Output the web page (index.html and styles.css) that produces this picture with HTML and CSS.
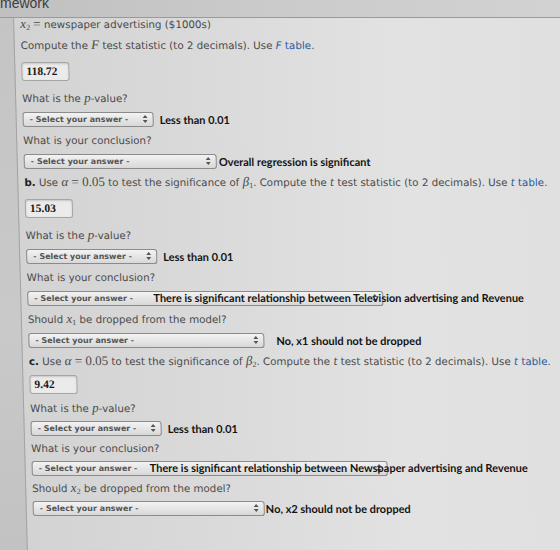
FILE: index.html
```html
<!DOCTYPE html>
<html>
<head>
<meta charset="utf-8">
<title>Homework</title>
<link rel="stylesheet" href="styles.css">
</head>
<body>
<header class="topbar"><span class="title">mework</span></header>
<main class="panel">
  <section class="part">
    <p class="line"><span class="mi">x</span><sub class="sub">2</sub> <span class="mn">=</span> newspaper advertising ($1000s)</p>
    <p class="line">Compute the <span class="mi">F</span> test statistic (to 2 decimals). Use <span class="link"><i>F</i> table</span>.</p>
    <div class="row inp-row"><span class="input">118.72</span></div>
    <p class="line">What is the <span class="mi">p</span>-value?</p>
    <div class="row">
      <span class="select w-short"><span class="label">- Select your answer -</span><svg class="arr" width="5" height="8" viewBox="0 0 5 8"><path d="M2.5 0L5 3H0z M2.5 8L5 5H0z" fill="#555"/></svg></span>
      <span class="ans gap-s">Less than 0.01</span>
    </div>
    <p class="line">What is your conclusion?</p>
    <div class="row">
      <span class="select w-mid"><span class="label">- Select your answer -</span><svg class="arr" width="5" height="8" viewBox="0 0 5 8"><path d="M2.5 0L5 3H0z M2.5 8L5 5H0z" fill="#555"/></svg></span>
      <span class="ans gap-xs">Overall regression is significant</span>
    </div>
  </section>

  <section class="part">
    <p class="line"><b class="lead">b.</b> Use <span class="mi">α</span> <span class="mn">= 0.05</span> to test the significance of <span class="mi">β</span><sub class="sub">1</sub>. Compute the <i>t</i> test statistic (to 2 decimals). Use <span class="link"><i>t</i> table</span>.</p>
    <div class="row inp-row"><span class="input">15.03</span></div>
    <p class="line">What is the <span class="mi">p</span>-value?</p>
    <div class="row">
      <span class="select w-short"><span class="label">- Select your answer -</span><svg class="arr" width="5" height="8" viewBox="0 0 5 8"><path d="M2.5 0L5 3H0z M2.5 8L5 5H0z" fill="#555"/></svg></span>
      <span class="ans gap-s">Less than 0.01</span>
    </div>
    <p class="line">What is your conclusion?</p>
    <div class="row">
      <span class="select w-long"><span class="label">- Select your answer -</span><svg class="arr" width="5" height="8" viewBox="0 0 5 8"><path d="M2.5 0L5 3H0z M2.5 8L5 5H0z" fill="#555"/></svg></span>
      <span class="ans over over-b">There is significant relationship between Television advertising and Revenue</span>
    </div>
    <p class="line">Should <span class="mi">x</span><sub class="sub">1</sub> be dropped from the model?</p>
    <div class="row">
      <span class="select w-med"><span class="label">- Select your answer -</span><svg class="arr" width="5" height="8" viewBox="0 0 5 8"><path d="M2.5 0L5 3H0z M2.5 8L5 5H0z" fill="#555"/></svg></span>
      <span class="ans gap-l">No, x1 should not be dropped</span>
    </div>
  </section>

  <section class="part tight">
    <p class="line"><b class="lead">c.</b> Use <span class="mi">α</span> <span class="mn">= 0.05</span> to test the significance of <span class="mi">β</span><sub class="sub">2</sub>. Compute the <i>t</i> test statistic (to 2 decimals). Use <span class="link"><i>t</i> table</span>.</p>
    <div class="row inp-row"><span class="input">9.42</span></div>
    <p class="line">What is the <span class="mi">p</span>-value?</p>
    <div class="row">
      <span class="select w-short"><span class="label">- Select your answer -</span><svg class="arr" width="5" height="8" viewBox="0 0 5 8"><path d="M2.5 0L5 3H0z M2.5 8L5 5H0z" fill="#555"/></svg></span>
      <span class="ans gap-s">Less than 0.01</span>
    </div>
    <p class="line">What is your conclusion?</p>
    <div class="row">
      <span class="select w-long"><span class="label">- Select your answer -</span><svg class="arr" width="5" height="8" viewBox="0 0 5 8"><path d="M2.5 0L5 3H0z M2.5 8L5 5H0z" fill="#555"/></svg></span>
      <span class="ans over over-c">There is significant relationship between Newspaper advertising and Revenue</span>
    </div>
    <p class="line">Should <span class="mi">x</span><sub class="sub">2</sub> be dropped from the model?</p>
    <div class="row">
      <span class="select w-med2"><span class="label">- Select your answer -</span><svg class="arr" width="5" height="8" viewBox="0 0 5 8"><path d="M2.5 0L5 3H0z M2.5 8L5 5H0z" fill="#555"/></svg></span>
      <span class="ans gap-0">No, x2 should not be dropped</span>
    </div>
  </section>
</main>
</body>
</html>
```
FILE: styles.css
```css
html, body {
  margin: 0;
  padding: 0;
  overflow: hidden;
}
body {
  width: 560px;
  height: 550px;
  background: linear-gradient(180deg, #c4c4c4, #c9c9c9 60%, #c2c2c2);
  font-family: "DejaVu Sans", Verdana, sans-serif;
  color: #4a4a4a;
}
.topbar {
  height: 17px;
  border-bottom: 1px solid #9a9a9a;
  background: linear-gradient(90deg, #c0c0c0, #cbcbcb 50%, #d2d2d2);
  overflow: hidden;
  position: relative;
  z-index: 1;
}
.title {
  display: block;
  margin-top: -4px;
  font-family: "Liberation Sans", Arial, sans-serif;
  font-size: 14px;
  line-height: 14px;
  color: #3c3c3c;
}
.panel {
  margin-left: 13px;
  margin-top: -2px;
  height: 540px;
  border-left: 1px solid #a3a3a3;
  padding-left: 6px;
  transform: skewX(1.48deg);
  transform-origin: 0 0;
  background: linear-gradient(90deg, #d3d3d3, #dadada 35%, #e2e2e2 70%, #e0e0e0);
  display: flex;
  flex-direction: column;
  gap: 5px;
}
.part {
  display: flex;
  flex-direction: column;
  gap: 5px;
}
.part.tight {
  gap: 4px;
}
.line {
  margin: 0;
  height: 16px;
  line-height: 16px;
  font-size: 10.3px;
  white-space: nowrap;
}
.lead {
  color: #222;
}
.mi {
  font-family: "Liberation Serif", "DejaVu Serif", serif;
  font-style: italic;
  font-size: 13px;
}
.mn {
  font-family: "Liberation Serif", "DejaVu Serif", serif;
  font-size: 13px;
}
.sub {
  font-family: "Liberation Serif", serif;
  font-size: 8px;
  line-height: 0;
  vertical-align: -2px;
}
.link {
  color: #2b5a9b;
}
.row {
  display: flex;
  align-items: center;
  height: 16px;
  position: relative;
  white-space: nowrap;
}
.inp-row {
  height: 19px;
  margin: 4px 0;
}
.tight .inp-row {
  margin: 2px 0;
}
.input {
  box-sizing: border-box;
  width: 48px;
  height: 19px;
  border: 1px solid #a6a6a6;
  border-radius: 3px;
  background: #ebebeb;
  box-shadow: inset 0 1px 2px rgba(0, 0, 0, 0.15);
  padding-left: 4px;
  font: bold 11.5px/17px "Liberation Serif", serif;
  color: #1a1a1a;
}
.select {
  box-sizing: border-box;
  display: flex;
  align-items: center;
  justify-content: space-between;
  height: 15px;
  border: 1px solid #8b8b8b;
  border-radius: 3px;
  padding: 0 5px 0 6px;
  background: linear-gradient(180deg, #f3f3f3, #d8d8d8);
}
.w-short { width: 131px; }
.w-mid { width: 193px; }
.w-long { width: 356px; }
.w-med { width: 236px; }
.w-med2 { width: 232px; }
.label {
  font: bold 8px "DejaVu Sans", Verdana, sans-serif;
  color: #555;
}
.arr {
  display: block;
}
.ans {
  font: bold 11px Lato, "Open Sans", sans-serif;
  color: #141414;
}
.gap-s { margin-left: 6px; }
.gap-xs { margin-left: 2px; }
.gap-l { margin-left: 12px; }
.gap-0 { margin-left: 1px; }
.over {
  position: absolute;
  top: 0;
  line-height: 16px;
}
.over-b { left: 126px; }
.over-c { left: 118px; }
```
